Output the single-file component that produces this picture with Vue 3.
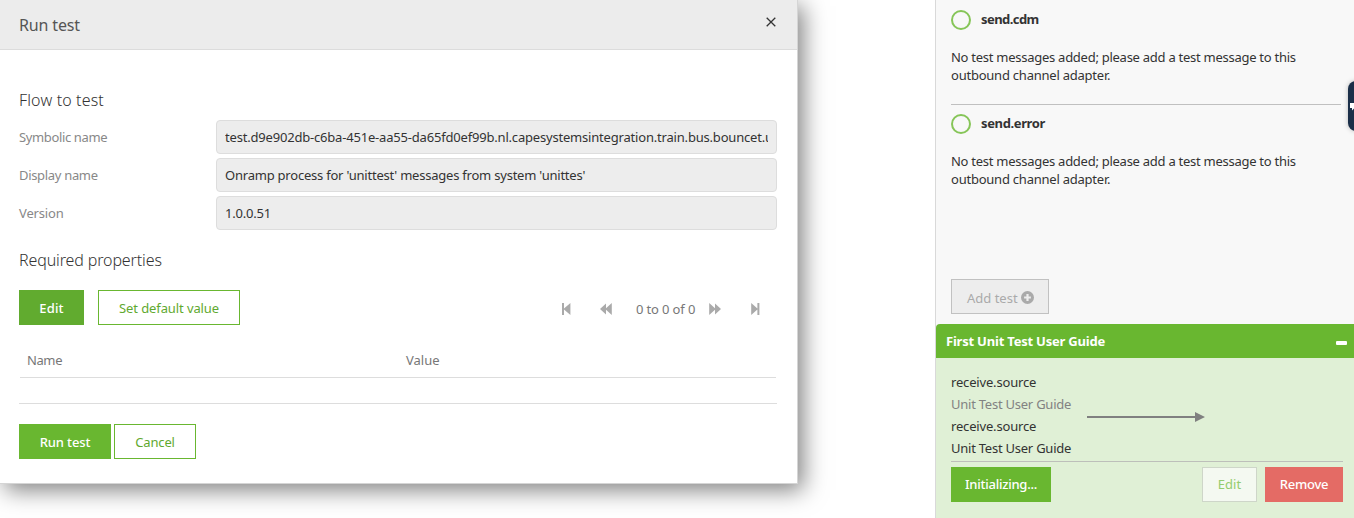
<script setup>
const fields = [
  { label: 'Symbolic name', cls: 'symbolic', value: 'test.d9e902db-c6ba-451e-aa55-da65fd0ef99b.nl.capesystemsintegration.train.bus.bouncet.u' },
  { label: 'Display name', cls: 'display', value: "Onramp process for 'unittest' messages from system 'unittes'" },
  { label: 'Version', cls: 'version', value: '1.0.0.51' },
]
const channels = [
  { name: 'send.cdm', cls: 'cdm' },
  { name: 'send.error', cls: 'error' },
]
</script>

<template>
  <div class="page">
    <section class="dialog">
      <header class="dialog-head">
        <h1>Run test</h1>
        <svg class="close" viewBox="0 0 10 10" width="10" height="10"><path d="M.7.7 9.3 9.3M9.3.7.7 9.3" /></svg>
      </header>
      <div class="dialog-body">
        <h2 class="flow-title">Flow to test</h2>
        <div class="fields">
          <div v-for="f in fields" :key="f.label" class="field" :class="f.cls">
            <label>{{ f.label }}</label>
            <div class="input"><span>{{ f.value }}</span></div>
          </div>
        </div>
        <h2 class="props-title">Required properties</h2>
        <div class="toolbar">
          <button class="btn edit">Edit</button>
          <button class="btn outline set-default">Set default value</button>
          <div class="pager">
            <svg class="first" viewBox="0 0 9 12" width="9" height="12"><path d="M0 0h2v5.4L8.4 0v12L2 6.6V12H0z" /></svg>
            <svg class="prev" viewBox="0 0 12 12" width="12" height="12"><path d="M0 6 6 .4v4.8L11.8 0v12L6 6.8v4.8z" /></svg>
            <span>0 to 0 of 0</span>
            <svg class="next" viewBox="0 0 12 12" width="12" height="12"><path d="M12 6 6 .4v4.8L.2 0v12L6 6.8v4.8z" /></svg>
            <svg class="last" viewBox="0 0 9 12" width="9" height="12"><path d="M8.4 0h-2v5.4L.2 0v12l6.2-5.4V12h2z" /></svg>
          </div>
        </div>
        <div class="table">
          <div class="thead"><span class="name">Name</span><span>Value</span></div>
          <div class="tbody"></div>
        </div>
        <div class="actions">
          <button class="btn run">Run test</button>
          <button class="btn outline cancel">Cancel</button>
        </div>
      </div>
    </section>

    <aside class="side">
      <div class="channels">
        <div v-for="c in channels" :key="c.name" class="channel">
          <div class="channel-head"><i class="ring"></i><b :class="c.cls">{{ c.name }}</b></div>
          <p><span class="l1">No test messages added; please add a test message to this</span><br /><span class="l2">outbound channel adapter.</span></p>
        </div>
      </div>
      <button class="btn add">
        <span>Add test</span>
        <svg viewBox="0 0 13 13" width="13" height="13"><path fill-rule="evenodd" d="M6.5 0a6.5 6.5 0 1 1 0 13 6.5 6.5 0 0 1 0-13zM5.4 3.1v2.3H3.1v2.2h2.3v2.3h2.2V7.6h2.3V5.4H7.6V3.1z" /></svg>
      </button>
      <div class="card-head"><b>First Unit Test User Guide</b><i class="minus"></i></div>
      <div class="card">
        <div class="route">
          <ul>
            <li class="src">receive.source</li>
            <li class="muted">Unit Test User Guide</li>
            <li class="src">receive.source</li>
            <li>Unit Test User Guide</li>
          </ul>
          <svg class="arrow" viewBox="0 0 118 10" width="118" height="10"><path d="M0 4h108V0l10 5-10 5V6H0z" /></svg>
        </div>
        <div class="card-actions">
          <button class="btn init">Initializing...</button>
          <button class="btn edit-test">Edit</button>
          <button class="btn remove">Remove</button>
        </div>
      </div>
    </aside>

    <div class="chat">
      <svg viewBox="0 0 12 9" width="12" height="9"><path d="M0 0h12v5H4.5L2 7.5V5H0z" /></svg>
    </div>
  </div>
</template>

<style>
body {
  margin: 0;
  background: #fff;
  overflow: hidden;
}
</style>

<style scoped>
* { box-sizing: border-box; }
.page {
  position: relative;
  display: flex;
  justify-content: space-between;
  width: 1354px;
  height: 518px;
  overflow: hidden;
  font: 13px/18px "Noto Sans", "Open Sans", sans-serif;
  color: #333;
}
h1, h2, p, ul { margin: 0; padding: 0; font-weight: 400; }
ul { list-style: none; }

.dialog {
  width: 798px;
  height: 484px;
  border: solid #d5d5d5;
  border-width: 0 1px 1px 0;
  background: #fff;
  box-shadow: 5px 6px 22px rgba(0, 0, 0, .5);
}
.dialog-head {
  display: flex;
  justify-content: space-between;
  height: 50px;
  padding: 0 21px 0 19px;
  background: #ececec;
  border-bottom: 1px solid #dcdcdc;
}
h1 { font-size: 16px; line-height: 51px; color: #555; letter-spacing: -.14px; }
.close { margin-top: 17px; fill: none; stroke: #333; stroke-width: 1.3; }
.dialog-body { padding: 39px 20px 0 19px; }
h2 { font-size: 16px; font-weight: 300; line-height: 22px; }
.flow-title { letter-spacing: .15px; }
.fields { display: grid; gap: 4px; margin-top: 9px; }
.field { display: grid; grid-template-columns: 197px 561px; height: 34px; line-height: 34px; }
.field label { color: #888; }
.input {
  padding: 0 8px;
  border: 1px solid #ddd;
  border-radius: 4px;
  background: #ededed;
  line-height: 32px;
}
.input span { display: block; overflow: hidden; white-space: nowrap; }
.symbolic label { letter-spacing: -.36px; }
.symbolic span { letter-spacing: -.19px; }
.display label { letter-spacing: -.32px; }
.display span { letter-spacing: -.22px; }
.version label { letter-spacing: -.15px; }
.version span { letter-spacing: -.2px; }
.props-title { margin-top: 19px; letter-spacing: -.12px; }

.btn {
  flex: none;
  height: 35px;
  padding: 2px 0 0;
  border: 1px solid #69b730;
  border-radius: 0;
  background: #69b730;
  color: #fff;
  font: 500 13px/31px "Noto Sans", "Open Sans", sans-serif;
  text-align: center;
  white-space: nowrap;
}
.outline { background: #fff; color: #5fa92f; font-weight: 400; }
.toolbar { display: flex; margin-top: 19px; }
.edit { width: 65px; background: #61ab2f; border-color: #61ab2f; letter-spacing: .2px; }
.set-default { width: 142px; margin-left: 14px; letter-spacing: -.1px; }
.pager { display: flex; align-items: center; margin-left: 321px; padding-top: 3px; color: #777; }
.pager svg { flex: none; fill: #aaa; }
.pager span { width: 60px; letter-spacing: -.14px; white-space: nowrap; }
.pager .first { margin-left: 1px; }
.prev { margin: 0 24px 0 29px; }
.next { margin: 0 30px 0 13px; }
.table { height: 79px; border-bottom: 1px solid #ddd; }
.thead {
  display: flex;
  height: 53px;
  margin: 0 1px;
  padding: 26px 0 0 7px;
  border-bottom: 1px solid #ddd;
  color: #777;
}
.thead .name { width: 379px; letter-spacing: -.4px; }
.actions { display: flex; gap: 3px; margin-top: 20px; }
.run { width: 92px; letter-spacing: -.15px; }
.cancel { width: 82px; letter-spacing: -.15px; }

.side { width: 419px; border-left: 1px solid #d9d9d9; background: #f8f8f8; }
.channels { height: 279px; padding: 10px 13px 0 15px; }
.channel { height: 94px; }
.channel + .channel { height: 104px; padding-top: 9px; border-top: 1px solid #c0c0c0; }
.channel-head { display: flex; gap: 10px; height: 20px; line-height: 18px; }
.ring { width: 20px; height: 20px; border: 2px solid #86c558; border-radius: 50%; }
.channel p { margin-top: 18px; white-space: nowrap; }
.cdm { letter-spacing: -.56px; }
.error { letter-spacing: -.37px; }
.l1 { letter-spacing: -.265px; }
.l2 { letter-spacing: -.23px; }
.add {
  display: flex;
  align-items: center;
  gap: 3px;
  width: 98px;
  margin-left: 15px;
  padding: 0 0 0 15px;
  background: #ededed;
  border-color: #c1c1c1;
  color: #aaa;
  font-weight: 400;
}
.add span { padding-top: 3px; }
.add svg { fill: #aaa; margin-top: 2px; }
.card-head {
  display: flex;
  justify-content: space-between;
  align-items: center;
  height: 34px;
  margin-top: 10px;
  padding: 0 7px 0 10px;
  border-radius: 4px 0 0 0;
  background: #69b730;
  color: #fff;
  letter-spacing: -.21px;
}
.minus { width: 11px; height: 4px; margin-top: 4px; border-radius: 1px; background: #fff; }
.card { height: 160px; padding: 13px 11px 0 15px; background: #e0f0d6; }
.route { display: flex; height: 91px; border-bottom: 1px solid #bdbfba; }
.route ul { width: 136px; line-height: 22px; letter-spacing: -.24px; white-space: nowrap; }
.route .src { letter-spacing: -.17px; }
.route .muted { color: #828282; }
.arrow { margin-top: 41px; fill: #808080; }
.card-actions { display: flex; padding-top: 5px; }
.card-actions .btn { padding-top: 0; line-height: 33px; }
.init { width: 100px; margin-right: auto; letter-spacing: -.24px; }
.edit-test {
  width: 55px;
  margin-right: 8px;
  background: #f4f9f1;
  border-color: #ced6c9;
  color: #94cc6e;
  font-weight: 400;
}
.remove { width: 78px; background: #e46b65; border-color: #e46b65; letter-spacing: -.25px; }

.chat {
  position: absolute;
  top: 81px;
  left: 1348px;
  width: 40px;
  height: 50px;
  padding: 22px 0 0 2px;
  border-radius: 8px;
  background: #1b2f49;
  box-shadow: 0 0 5px rgba(0, 0, 0, .25);
}
.chat svg { display: block; fill: #fff; }
</style>
